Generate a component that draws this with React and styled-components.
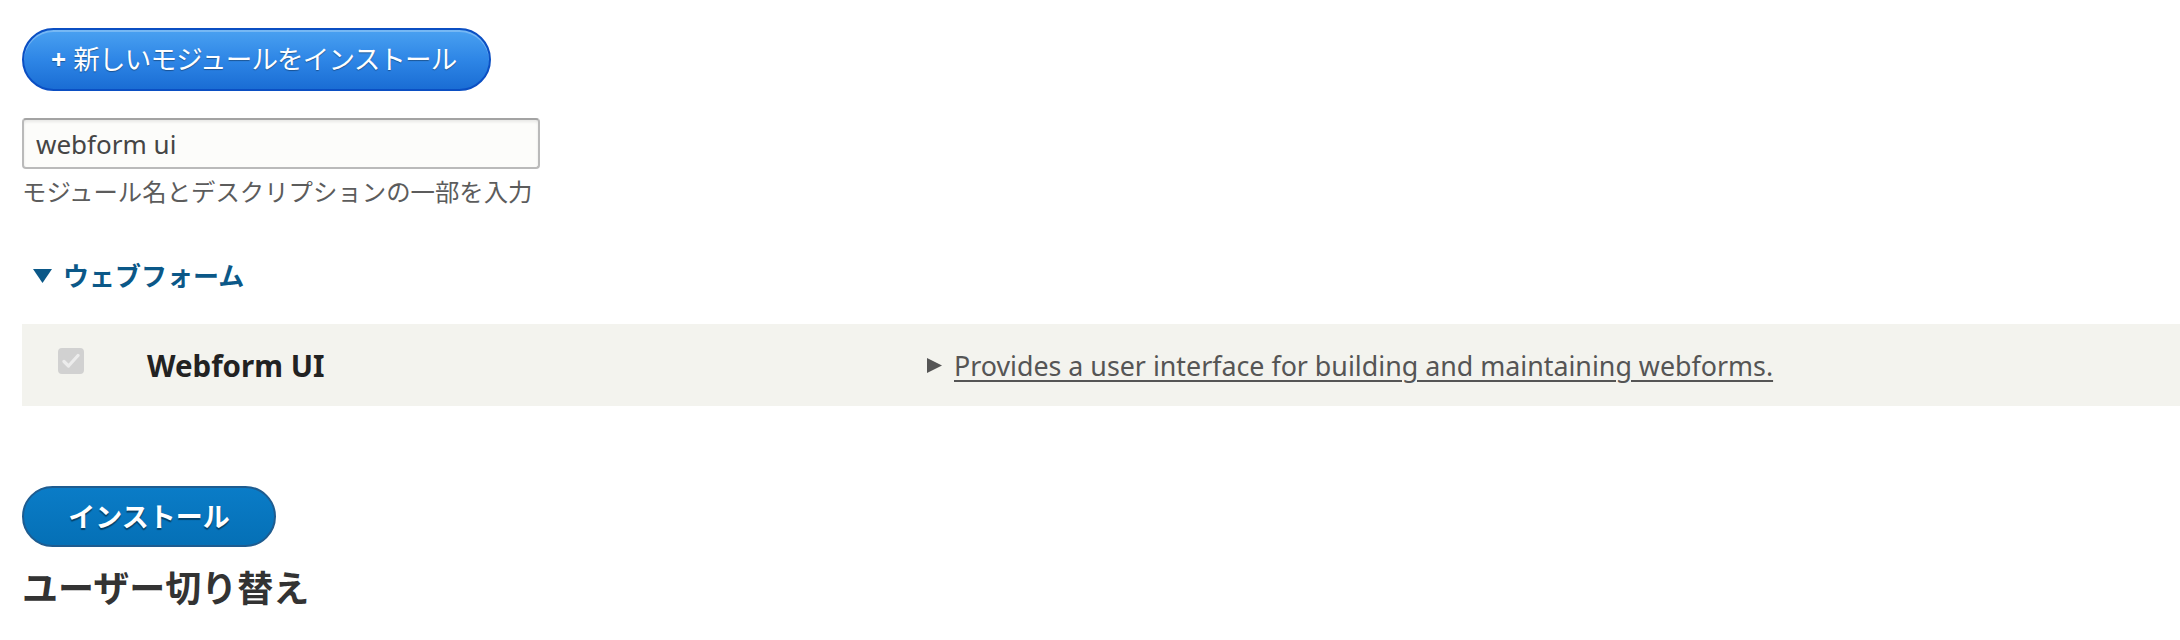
import React from "react";
import styled, { createGlobalStyle } from "styled-components";

const GlobalStyle = createGlobalStyle`
  html, body { margin: 0; padding: 0; background: #ffffff; }
  body {
    font-family: "Noto Sans", "Noto Sans CJK JP", sans-serif;
    color: #333333;
  }
  * { box-sizing: border-box; }
`;

const Page = styled.main`
  padding: 28px 0 0 22px;
`;

const Toolbar = styled.div`
  margin-bottom: 27px;
`;

const ActionButton = styled.a`
  display: inline-flex;
  align-items: center;
  height: 63px;
  padding: 0 33px 0 27px;
  border: 2px solid #0b4fc3;
  border-radius: 32px;
  background: linear-gradient(to bottom, #4aa1f1 0%, #2e86e6 50%, #1a6dd4 100%);
  box-shadow: inset 0 2px 0 rgba(255, 255, 255, 0.25);
  color: #ffffff;
  font-size: 26.5px;
  font-weight: 400;
  letter-spacing: -0.8px;
  line-height: 1;
  text-decoration: none;
  text-shadow: 0 1px 1px rgba(0, 0, 0, 0.35);
  white-space: nowrap;
`;

const Plus = styled.span`
  font-weight: 700;
  margin-right: 8px;
`;

const SearchInput = styled.input`
  display: block;
  width: 518px;
  height: 51px;
  margin: 0;
  padding: 0 12px;
  border: 2px solid #bababa;
  border-top-color: #a3a3a3;
  border-radius: 4px;
  background: #fcfcfa;
  box-shadow: inset 0 2px 3px rgba(0, 0, 0, 0.08);
  font-family: "Noto Sans", "Noto Sans CJK JP", sans-serif;
  font-size: 26px;
  color: #454545;
  outline: none;
`;

const Hint = styled.div`
  margin-top: 5px;
  font-size: 24.4px;
  line-height: 36px;
  color: #5c5c5c;
`;

const Summary = styled.div`
  margin-top: 45px;
  display: flex;
  align-items: center;
  padding-left: 11px;
  font-size: 26px;
  font-weight: 700;
  line-height: 42px;
  color: #0b5888;
`;

const Label = styled.span`
  margin-left: ${(p) => p.$gap}px;
`;

const Row = styled.div`
  margin-top: 27px;
  height: 82px;
  display: flex;
  align-items: center;
  padding-left: 36px;
  background: #f3f3ee;
`;

const Checkbox = styled.span`
  flex: none;
  width: 26px;
  height: 26px;
  margin-bottom: 8px;
  border-radius: 4px;
  background: #d1d1d1;
  display: flex;
  align-items: center;
  justify-content: center;
`;

const ModuleName = styled.span`
  flex: none;
  width: 780px;
  margin-left: 63px;
  font-size: 29.5px;
  font-weight: 700;
  color: #222222;
`;

const Desc = styled.div`
  display: flex;
  align-items: center;
`;

const DescLink = styled.a`
  margin-left: 12px;
  font-size: 26.8px;
  color: #555555;
  text-decoration: underline;
  text-decoration-thickness: 2px;
  text-underline-offset: 4px;
  cursor: pointer;
`;

const PrimaryButton = styled.button`
  display: flex;
  align-items: center;
  justify-content: center;
  margin-top: 80px;
  width: 254px;
  height: 61px;
  padding: 0;
  border: 2px solid #1e5c90;
  border-radius: 31px;
  background: linear-gradient(to bottom, #0a7cc7 0%, #0570b6 100%);
  color: #ffffff;
  font-family: "Noto Sans", "Noto Sans CJK JP", sans-serif;
  font-size: 27px;
  font-weight: 700;
  line-height: 1;
  text-shadow: 0 2px 1px rgba(0, 0, 0, 0.45);
  cursor: pointer;
`;

const Heading = styled.h2`
  margin: 19px 0 0;
  font-size: 36px;
  font-weight: 700;
  line-height: 46px;
  color: #333333;
`;

const Triangle = ({ dir, w, h, color }) => (
  <svg width={w} height={h} viewBox={`0 0 ${w} ${h}`} style={{ flex: "none" }}>
    {dir === "down" ? (
      <polygon points={`0,0 ${w},0 ${w / 2},${h}`} fill={color} />
    ) : (
      <polygon points={`0,0 ${w},${h / 2} 0,${h}`} fill={color} />
    )}
  </svg>
);

export default function App() {
  return (
    <>
      <GlobalStyle />
      <Page>
        <Toolbar>
          <ActionButton href="#">
            <Plus>+</Plus>新しいモジュールをインストール
          </ActionButton>
        </Toolbar>
        <SearchInput defaultValue="webform ui" />
        <Hint>モジュール名とデスクリプションの一部を入力</Hint>
        <Summary>
          <Triangle dir="down" w={19} h={14} color="#0b5888" />
          <Label $gap={11}>ウェブフォーム</Label>
        </Summary>
        <Row>
          <Checkbox>
            <svg width="18" height="16" viewBox="0 0 18 16">
              <polyline
                points="2,8.5 6.5,13 16,2.5"
                fill="none"
                stroke="#ececec"
                strokeWidth="3.2"
                strokeLinecap="round"
                strokeLinejoin="round"
              />
            </svg>
          </Checkbox>
          <ModuleName>Webform UI</ModuleName>
          <Desc>
            <Triangle dir="right" w={15} h={15} color="#555555" />
            <DescLink>Provides a user interface for building and maintaining webforms.</DescLink>
          </Desc>
        </Row>
        <PrimaryButton>インストール</PrimaryButton>
        <Heading>ユーザー切り替え</Heading>
      </Page>
    </>
  );
}
